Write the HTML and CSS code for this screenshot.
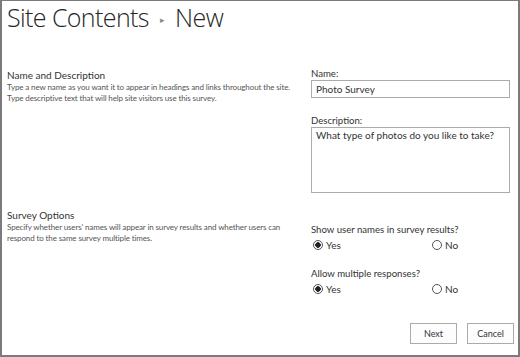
FILE: index.html
```html
<!DOCTYPE html>
<html lang="en">
<head>
  <meta charset="UTF-8" />
  <title>Site Contents - New</title>
  <link rel="stylesheet" href="styles.css">
</head>
<body>
  <div class="frame">
    <h1 class="title">Site Contents <span class="crumb">&#9656;</span> New</h1>

    <div class="section first">
      <div class="info">
        <div class="info-head">Name and Description</div>
        <div class="info-text">Type a new name as you want it to appear in headings and links throughout the site. Type descriptive text that will help site visitors use this survey.</div>
      </div>
      <div class="fields">
        <label class="field-label">Name:</label>
        <div class="input">Photo Survey</div>
        <label class="field-label desc-label">Description:</label>
        <div class="input textarea">What type of photos do you like to take?</div>
      </div>
    </div>

    <div class="section second">
      <div class="info">
        <div class="info-head">Survey Options</div>
        <div class="info-text">Specify whether users' names will appear in survey results and whether users can respond to the same survey multiple times.</div>
      </div>
      <div class="fields">
        <div class="question">Show user names in survey results?</div>
        <div class="radios">
          <span class="radio checked">Yes</span>
          <span class="radio">No</span>
        </div>
        <div class="question q2">Allow multiple responses?</div>
        <div class="radios">
          <span class="radio checked">Yes</span>
          <span class="radio">No</span>
        </div>
      </div>
    </div>

    <div class="buttons">
      <button type="button">Next</button>
      <button type="button">Cancel</button>
    </div>
  </div>
</body>
</html>
```

FILE: styles.css
```css
html, body {
  margin: 0;
  padding: 0;
}

body {
  font-family: 'Lato', 'Open Sans', sans-serif;
  color: #262626;
  background: #fff;
}

.frame {
  box-sizing: border-box;
  width: 520px;
  height: 357px;
  border: 2px solid #7b7b7b;
  border-top-width: 1px;
  padding: 0 4px 0 5px;
}

.title {
  margin: 0;
  font-family: 'Open Sans', sans-serif;
  font-weight: 300;
  font-size: 25px;
  line-height: 32px;
  color: #262626;
  letter-spacing: -0.6px;
  white-space: nowrap;
}

.crumb {
  font-size: 9px;
  color: #8a8a8a;
  vertical-align: 4px;
  margin: 0 5px;
}

.section {
  display: flex;
}

.section.first {
  margin-top: 31px;
}

.section.second {
  margin-top: 14px;
}

.info {
  width: 304px;
  flex-shrink: 0;
}

.info-head {
  font-size: 10px;
  line-height: 13px;
  color: #333;
  margin-top: 2px;
}

.info-text {
  font-size: 8px;
  line-height: 11px;
  letter-spacing: -0.12px;
  color: #555;
  width: 288px;
}

.fields {
  flex: 1;
  min-width: 0;
  padding-right: 4px;
}

.field-label, .question {
  display: block;
  font-size: 9.6px;
  line-height: 13px;
  color: #333;
}

.input {
  box-sizing: border-box;
  height: 18px;
  margin-top: 0;
  border: 1px solid #ababab;
  font-size: 10px;
  line-height: 16px;
  padding: 0 4px;
  color: #333;
}

.desc-label {
  margin-top: 16px;
}

.textarea {
  height: 66px;
  line-height: 14px;
  padding-top: 0;
}

.question {
  margin-top: 16px;
}

.question.q2 {
  margin-top: 16px;
}

.radios {
  display: flex;
  margin-top: 3px;
}

.radio {
  flex: none;
  font-size: 10px;
  line-height: 12px;
  color: #333;
  width: 119px;
  display: flex;
  align-items: center;
}

.radio:last-child {
  width: auto;
}

.radio::before {
  content: "";
  box-sizing: border-box;
  width: 10px;
  height: 10px;
  border: 1px solid #555;
  border-radius: 50%;
  margin: 0 3px 0 2px;
  background: #fff;
}

.radio.checked::before {
  background: radial-gradient(circle, #222 0 2.5px, #fff 3px);
}

.buttons {
  display: flex;
  justify-content: flex-end;
  gap: 10px;
  margin-top: 28px;
}

.buttons button {
  width: 47px;
  height: 21px;
  border: 1px solid #ababab;
  background: #fdfdfd;
  font-family: inherit;
  font-size: 9px;
  color: #333;
  padding: 0;
}
```
